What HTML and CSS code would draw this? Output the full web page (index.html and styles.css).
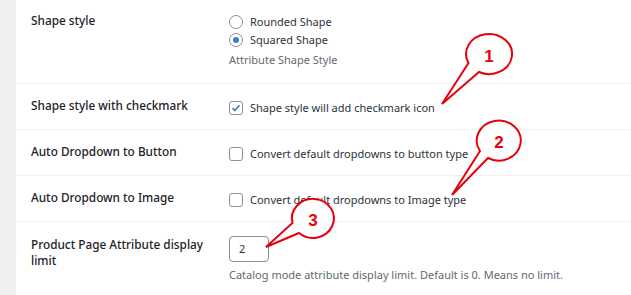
FILE: index.html
```html
<!DOCTYPE html>
<html lang="en">
<head>
    <meta charset="UTF-8">
    <meta name="viewport" content="width=device-width, initial-scale=1.0">
    <title>Swatches settings</title>
    <link rel="stylesheet" href="styles.css">
</head>
<body>
    <div class="page">
        <div class="settings">
            <div class="row row-first">
                <div class="label">Shape style</div>
                <div class="field">
                    <label class="choice"><span class="radio"></span>Rounded Shape</label>
                    <label class="choice"><span class="radio checked"></span>Squared Shape</label>
                    <p class="desc">Attribute Shape Style</p>
                </div>
            </div>

            <div class="row">
                <div class="label">Shape style with checkmark</div>
                <div class="field">
                    <label class="choice"><span class="checkbox checked"><svg viewBox="0 0 14 14"><path d="M3 7.2l2.6 2.7L11 3.8"/></svg></span>Shape style will add checkmark icon</label>
                </div>
            </div>

            <div class="row">
                <div class="label">Auto Dropdown to Button</div>
                <div class="field">
                    <label class="choice"><span class="checkbox"></span>Convert default dropdowns to button type</label>
                </div>
            </div>

            <div class="row">
                <div class="label">Auto Dropdown to Image</div>
                <div class="field">
                    <label class="choice"><span class="checkbox"></span>Convert default dropdowns to Image type</label>
                </div>
            </div>

            <div class="row row-last">
                <div class="label">Product Page Attribute display limit</div>
                <div class="field">
                    <div class="number">2</div>
                    <p class="desc">Catalog mode attribute display limit. Default is 0. Means no limit.</p>
                </div>
            </div>
        </div>

        <!-- numbered callouts drawn over the screenshot -->
        <svg class="callouts" width="631" height="295" viewBox="0 0 631 295">
            <path d="M468.5 63 A23 20 0 1 1 479 72 L442 104 Z"/>
            <text x="489" y="62">1</text>
            <path d="M480 151 A22 20 0 1 1 488 158 L452 195 Z"/>
            <text x="499" y="148">2</text>
            <path d="M292.5 223 A21 19.5 0 1 1 299 233 L266 247 Z"/>
            <text x="313" y="226">3</text>
        </svg>
    </div>
</body>
</html>
```

FILE: styles.css
```css
body {
    margin: 0;
    background: #f0f0f1;
    font-family: 'Noto Sans', 'Liberation Sans', sans-serif;
    font-size: 11px;
    color: #2c3338;
}

.page {
    position: relative;
    width: 631px;
    height: 295px;
    overflow: hidden;
}

.settings {
    margin-left: 16px;
    height: 100%;
    background: #fff;
}

.row {
    display: grid;
    grid-template-columns: 198px 1fr;
    padding-left: 15px;
    border-bottom: 1px solid #f0f0f1;
}

.label {
    padding-top: 13px;
    line-height: 16px;
    font-size: 11.8px;
    font-weight: 500;
    color: #1d2327;
}

.field {
    padding: 16px 0 13px;
}

.row-first .label {
    padding-top: 12px;
}

.row-first .field {
    padding: 13px 0 15px;
}

.row-last {
    border-bottom: none;
}

.row-last .label {
    padding-top: 14px;
    padding-right: 14px;
}

.row-last .field {
    padding-top: 14px;
}

.choice {
    display: flex;
    align-items: center;
    height: 16px;
    line-height: 16px;
}

.row-first .choice {
    height: 18px;
}

.radio,
.checkbox {
    box-sizing: border-box;
    width: 14px;
    height: 14px;
    margin-right: 7px;
    border: 1px solid #8c8f94;
    background: #fff;
    flex-shrink: 0;
}

.radio {
    border-radius: 50%;
    position: relative;
}

.radio.checked::after {
    content: "";
    position: absolute;
    left: 3px;
    top: 3px;
    width: 6px;
    height: 6px;
    border-radius: 50%;
    background: #3582c4;
}

.checkbox {
    border-radius: 3px;
}

.checkbox svg {
    display: block;
    width: 12px;
    height: 12px;
}

.checkbox path {
    fill: none;
    stroke: #3582c4;
    stroke-width: 2;
}

.desc {
    margin: 3px 0 0;
    line-height: 16px;
    color: #646970;
}

.number {
    box-sizing: border-box;
    width: 40px;
    height: 26px;
    padding-left: 9px;
    border: 1px solid #8c8f94;
    border-radius: 4px;
    line-height: 24px;
    color: #2c3338;
}

.row-last .desc {
    margin-top: 5px;
}

.callouts {
    position: absolute;
    top: 0;
    left: 0;
    pointer-events: none;
}

.callouts path {
    fill: #fff;
    stroke: #e8000b;
    stroke-width: 2;
    stroke-linejoin: miter;
}

.callouts text {
    font-family: 'Liberation Sans', Arial, sans-serif;
    font-weight: bold;
    font-size: 17px;
    fill: #e8000b;
    text-anchor: middle;
}
```
